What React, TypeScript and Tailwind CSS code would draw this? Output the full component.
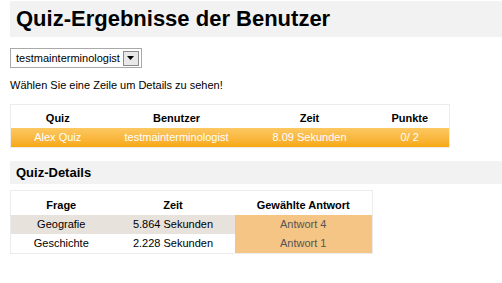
import { useState } from "react";

const results = [
  { quiz: "Alex Quiz", user: "testmainterminologist", time: "8.09 Sekunden", points: "0/ 2" },
];

const details = [
  { question: "Geografie", time: "5.864 Sekunden", answer: "Antwort 4" },
  { question: "Geschichte", time: "2.228 Sekunden", answer: "Antwort 1" },
];

export default function App() {
  const [user, setUser] = useState("testmainterminologist");

  return (
    <div className="w-[502px] h-[283px] bg-white pl-[10px] pt-[1px] font-['Liberation_Sans',Arial,sans-serif] text-black overflow-hidden">
      <div className="bg-[#f2f2f2] h-[36px] pl-[6px] flex items-center">
        <h1 className="text-[22px] font-bold leading-none">Quiz-Ergebnisse der Benutzer</h1>
      </div>

      <div className="mt-[11px] inline-flex items-center h-[20px] border border-[#a9a9a9] pl-[5px] pr-[2px] gap-[3px]">
        <span className="text-[11px] leading-none">{user}</span>
        <button
          onClick={() => setUser(user)}
          className="w-[16px] h-[15px] bg-[#e8e8e8] border border-[#8a8a8a] flex items-center justify-center"
        >
          <svg width="7" height="4" viewBox="0 0 7 4">
            <path d="M0 0h7L3.5 4z" fill="#000" />
          </svg>
        </button>
      </div>

      <p className="mt-[9px] text-[11px] leading-[14px]">Wählen Sie eine Zeile um Details zu sehen!</p>

      <table className="mt-[12px] w-[439px] border-collapse border border-[#ececec] text-[11px] table-fixed">
        <thead>
          <tr className="h-[24px]">
            <th className="w-[94px] font-bold pt-[4px]">Quiz</th>
            <th className="w-[144px] font-bold pt-[4px]">Benutzer</th>
            <th className="w-[122px] font-bold pt-[4px]">Zeit</th>
            <th className="w-[79px] font-bold pt-[4px]">Punkte</th>
          </tr>
        </thead>
        <tbody>
          {results.map((r, i) => (
            <tr key={i} className="h-[19px] text-white bg-gradient-to-b from-[#fcc860] to-[#f7a90a] text-center">
              <td>{r.quiz}</td>
              <td>{r.user}</td>
              <td>{r.time}</td>
              <td>{r.points}</td>
            </tr>
          ))}
        </tbody>
      </table>

      <div className="mt-[13px] bg-[#f2f2f2] h-[23px] pl-[6px] flex items-center">
        <h2 className="text-[13px] font-bold leading-none">Quiz-Details</h2>
      </div>

      <table className="mt-[6px] w-[362px] border-collapse border border-[#ececec] text-[11px] table-fixed">
        <thead>
          <tr className="h-[25px]">
            <th className="w-[101px] font-bold pt-[4px]">Frage</th>
            <th className="w-[123px] font-bold pt-[4px]">Zeit</th>
            <th className="w-[138px] font-bold pt-[4px]">Gewählte Antwort</th>
          </tr>
        </thead>
        <tbody>
          {details.map((d, i) => (
            <tr key={i} className={`h-[19px] text-center ${i === 0 ? "bg-[#e8e2dc]" : "bg-white"}`}>
              <td>{d.question}</td>
              <td>{d.time}</td>
              <td className="bg-[#f4c585] text-[#555555]">{d.answer}</td>
            </tr>
          ))}
        </tbody>
      </table>
    </div>
  );
}
